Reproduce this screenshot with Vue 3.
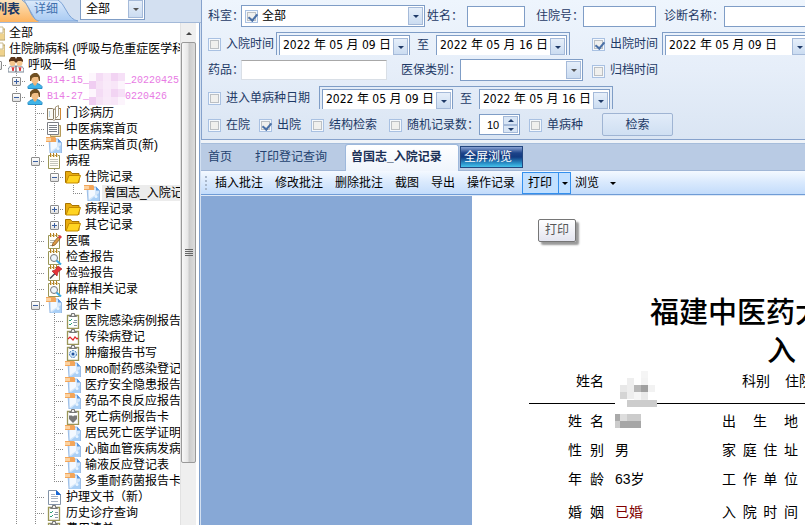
<script setup>
import { ref } from 'vue'

const pad = '<path d="M2.500 2.500h11v13h-11z" fill="#fffef6" stroke="#9a9658"/><path d="M4.500 0v4M7.500 0v4M10.500 0v4" stroke="#b9811f"/><path d="M5.500 1v3M8.500 1v3M11.500 1v3" stroke="#e8d9b0"/>'
const clip = '<path d="M2.500 2.500h11v13h-11z" fill="#fdfefe" stroke="#9a9658" stroke-width="1.300"/><path d="M4.500 3.500v-1h2v-2h3v2h2v1z" fill="#eee" stroke="#777"/>'

const art = {
  box: '<path d="M1 3h5l1 1h9v11H1z" fill="#f3e3b8" stroke="#b79a55"/><path d="M8 2h6v6H8z" fill="#fff" stroke="#c9b98c"/><path d="M3 9h12v5H3z" fill="#efd28c"/>',
  group: '<path d="M0 15q0-6 4-6h8q4 0 4 6z" fill="#fafcfd" stroke="#7f8b99"/><circle cx="4.500" cy="6" r="3" fill="#f5c68d"/><circle cx="11.500" cy="6" r="3" fill="#f5c68d"/><path d="M1 5V3l2-3h4l1 2 1-2h4l2 3v2l-2-1h-3l-2 2-2-2H3z" fill="#5b3418"/><path d="M4 10l1 4 1-4M11 10l1 4 1-4" stroke="#d22" fill="none"/><path d="M8 9v6" stroke="#445"/>',
  person: '<path d="M1 15.500v-2l2-2 3-1h4l3 1 2 2v2z" fill="#3fb4e8" stroke="#2a90c8"/><path d="M6 9h4v2l-2 2-2-2z" fill="#e8ae74"/><ellipse cx="8" cy="6" rx="4" ry="4.500" fill="#f2bf86"/><path d="M3 8V3l2-2 2-1h3l2 2 1 2v4h-1L11 4H7L5 5 4 8z" fill="#705023"/>',
  book: '<path d="M1.500 3.500l5 0 1.500 1 1.500-1h5v11H9l-1 1-1-1H1.500z" fill="#fbfaf4" stroke="#8a7a62"/><path d="M7.500 4v10" stroke="#8a7a62"/><path d="M9.500 2l3-1.500v10l-3 3z" fill="#fff" stroke="#a89a7e"/><path d="M14.500 3v11" stroke="#d08a35"/><path d="M3.500 6v6" stroke="#b8cfdc"/>',
  pages: '<path d="M4.500 4.500h10v11h-10z" fill="#efe0b8" stroke="#b59a58"/><path d="M1.500 1.500h11v12h-11z" fill="#fff" stroke="#7c7f84"/><path d="M3 4.500h8M3 6.500h8M3 8.500h8M3 10.500h8" stroke="#7a7f86"/>',
  docnew: '<path d="M3 2h9l3.500 3.500V16H4z" fill="#d3e6fa" stroke="#86aee0" stroke-width=".8"/><path d="M5 5h6v5l-6 4z" fill="#f4f9ff"/><path d="M12 1.500l3.500 4H12z" fill="#5b97de"/><path d="M5 16l10-8v8z" fill="#a9cff6"/><circle cx="12" cy="11.500" r="1.500" fill="#e8f4ff"/><path d="M0 0h9l1 1v4H0z" fill="#f3a65a"/><path d="M0 1h5v3H0z" fill="#fcd2a0"/>',
  notepad: pad + '<path d="M4 6.500h8M4 8.500h8M4 10.500h8M4 12.500h8" stroke="#c3c5bc"/>',
  pencil: pad + '<path d="M4 7.500h5M4 9.500h3M4 12.500h4" stroke="#b4b8b0"/><path d="M6 13l1-3 5-6 2 2-5 6z" fill="#d99a45" stroke="#7c4a1c" stroke-width=".7"/><path d="M12 4l2-2 2 2-2 2z" fill="#e0343c"/>',
  search: pad + '<circle cx="8" cy="9" r="3.500" fill="#eef6fb" stroke="#777"/><path d="M10.500 11.500l4.500 4" stroke="#36a9e6" stroke-width="2"/>',
  pin: pad + '<path d="M4 13.500l5-5" stroke="#445" stroke-width="1.500"/><path d="M6 6l3-1 3-4 4 3-4 3-1 4z" fill="#e63338" stroke="#a31519" stroke-width=".6"/>',
  folder: '<path d="M.5 13.500v-11h5l1.500 2h7v9z" fill="#e8ac10" stroke="#a87400"/><path d="M1 14l3-7.500h11.500l-2.500 7.500z" fill="#ffd422" stroke="#c58b00"/>',
  check: clip + '<path d="M4 7l1 1 2-2M4 11l1 1 2-2" fill="none" stroke="#2aa07a"/><path d="M9 7.500h3M8 9.500h4M9 12.500h3" stroke="#8899a8"/>',
  line: clip + '<path d="M3 10l2-2 3 3 2-3 2 2 1-1" fill="none" stroke="#e0262c" stroke-width="1.200"/>',
  dot: clip + '<circle cx="8" cy="9" r="3.500" fill="#d4e8fa" stroke="#3c78b8" stroke-dasharray="2 1"/><circle cx="8" cy="9" r="1.500" fill="#1e4f9a"/>',
  heart: clip + '<path d="M8 14L4 10V6.500h3l1 1 1-1h3V10z" fill="#777"/>',
  sheet: '<path d="M2.500 1.500h8l4 4v10h-12z" fill="#fff" stroke="#8494a8"/><path d="M10 1l5 5h-5z" fill="#1767d8"/><path d="M5 5.500h4M5 7.500h7M5 9.500h7M5 12.500h7" stroke="#a7b2c2"/>',
}

/* guides: v line, t branch, l last branch, + / - toggles, p toggle on last branch, . blank */
const rows = [
  { g: '', i: 'box', t: '全部' },
  { g: '', i: 'box', t: '住院肺病科 (呼吸与危重症医学科' },
  { g: '-', i: 'group', t: '呼吸一组' },
  { g: '.+', i: 'person', a: 'B14-15_', b: '_20220425' },
  { g: '.-', i: 'person', a: 'B14-27_', b: '0220426' },
  { g: '.vt', i: 'book', t: '门诊病历' },
  { g: '.vt', i: 'pages', t: '中医病案首页' },
  { g: '.vt', i: 'docnew', t: '中医病案首页(新)' },
  { g: '.v-', i: 'notepad', t: '病程' },
  { g: '.vv-', i: 'folder', t: '住院记录' },
  { g: '.vvvl', i: 'docnew', t: '曾国志_入院记', on: true },
  { g: '.vv+', i: 'folder', t: '病程记录' },
  { g: '.vvp', i: 'folder', t: '其它记录' },
  { g: '.vt', i: 'pencil', t: '医嘱' },
  { g: '.vt', i: 'search', t: '检查报告' },
  { g: '.vt', i: 'pin', t: '检验报告' },
  { g: '.vt', i: 'search', t: '麻醉相关记录' },
  { g: '.v-', i: 'docnew', t: '报告卡' },
  { g: '.vvt', i: 'check', t: '医院感染病例报告' },
  { g: '.vvt', i: 'line', t: '传染病登记' },
  { g: '.vvt', i: 'dot', t: '肿瘤报告书写' },
  { g: '.vvt', i: 'docnew', m: 'MDRO', t: '耐药感染登记' },
  { g: '.vvt', i: 'docnew', t: '医疗安全隐患报告' },
  { g: '.vvt', i: 'docnew', t: '药品不良反应报告' },
  { g: '.vvt', i: 'heart', t: '死亡病例报告卡' },
  { g: '.vvt', i: 'docnew', t: '居民死亡医学证明' },
  { g: '.vvt', i: 'docnew', t: '心脑血管疾病发病' },
  { g: '.vvt', i: 'docnew', t: '输液反应登记表' },
  { g: '.vvl', i: 'docnew', t: '多重耐药菌报告卡' },
  { g: '.vt', i: 'sheet', t: '护理文书（新）' },
  { g: '.vt', i: 'check', t: '历史诊疗查询' },
  { g: '.vt', i: 'check', t: '费用清单' },
]

const kind = { v: 'v', t: 'v h', l: 'half h', '+': 'v h', '-': 'v h', p: 'half h', '.': '' }
const tools = ['插入批注', '修改批注', '删除批注', '截图', '导出', '操作记录']
const from = ref('2022 年 05 月 09 日')
const to = ref('2022 年 05 月 16 日')

const tiles = ['#fff', '#fff', '#fff', '#f5f5f5', '#fff', '#fff', '#eee', '#fff', '#f3f3f3', '#fff', '#e8e8e8', '#eee', '#b8b8b8', '#a0a0a0', '#f2f2f2', '#d5d5d5', '#eee', '#f6f6f6', '#e9e9e9', '#fff', '#fff', '#fff', '#f6f6f6', '#ebebeb', '#fff']
const pinks = ['#fdf6fd', '#f4dcf5', '#f9e8f9', '#f2d4f3', '#f6e0f7', '#f0cdf2', '#f6e2f6', '#f9eaf9', '#f8e6f8', '#fcf4fc']

const record = [
  ['姓 名', '', '出 生 地'],
  ['性 别', '男', '家 庭 住 址'],
  ['年 龄', '63岁', '工 作 单 位'],
  ['婚 姻', '已婚', '入 院 时 间'],
]
</script>

<template>
  <div class="app">
    <aside class="side">
      <div class="side-top">
        <svg class="side-shape" width="80" height="22" viewBox="0 0 80 22" aria-hidden="true">
          <defs>
            <linearGradient id="org" x1="0" y1="0" x2="0" y2="1"><stop offset="0" stop-color="#fbe3bd" /><stop offset="1" stop-color="#fdb460" /></linearGradient>
            <linearGradient id="blu" x1="0" y1="0" x2="0" y2="1"><stop offset="0" stop-color="#dceafb" /><stop offset="1" stop-color="#a9cbf3" /></linearGradient>
          </defs>
          <path d="M24 0H58Q62 2 66 10Q71 20 78 21H36z" fill="url(#blu)" stroke="#7da3d6" />
          <path d="M0 0H22Q26 2 29 9Q33 20 39 22H0z" fill="url(#org)" />
          <path d="M22 0Q26 2 29 9Q33 20 39 21" fill="none" stroke="#8aa3c4" />
        </svg>
        <button class="side-tab on">列表</button>
        <button class="side-tab">详细</button>
        <div class="combo scope">
          <select aria-label="范围"><option>全部</option></select>
          <span class="drop gray"></span>
        </div>
      </div>
      <div class="tree-wrap">
        <div class="tree" role="tree">
          <div v-for="(r, k) in rows" :key="k" class="row" role="treeitem">
            <span v-for="(c, n) in r.g" :key="n" class="cell" :class="kind[c]">
              <i v-if="'+-p'.includes(c)" class="toggle" :class="{ plus: c !== '-' }"></i>
            </span>
            <svg class="ico" width="16" height="16" viewBox="0 0 16 16" fill="none" v-html="art[r.i]"></svg>
            <span v-if="r.a" class="txt patient">{{ r.a }}<span class="veil"><i v-for="(p, n) in pinks" :key="n" :style="{ background: p }"></i></span>{{ r.b }}</span>
            <span v-else class="txt" :class="{ on: r.on }"><span v-if="r.m" class="mono">{{ r.m }}</span>{{ r.t }}</span>
          </div>
        </div>
        <div class="scroll">
          <button class="up" aria-label="向上"></button>
          <div class="thumb"><i></i><i></i><i></i><i></i></div>
        </div>
      </div>
    </aside>

    <main class="main">
      <form class="filters" @submit.prevent>
        <div class="line l1">
          <label for="dept">科室：</label>
          <div class="combo dept">
            <input type="checkbox" checked aria-label="全部科室">
            <select id="dept"><option>全部</option></select>
            <span class="drop"></span>
          </div>
          <label for="name">姓名：</label>
          <input id="name" class="box w58">
          <label for="no">住院号：</label>
          <input id="no" class="box w73">
          <label for="diag">诊断名称：</label>
          <input id="diag" class="box open-end">
        </div>
        <div class="line l2">
          <input id="in" type="checkbox"><label for="in">入院时间</label>
          <div class="range">
            <div class="date"><input v-model="from" aria-label="入院开始"><span class="drop"></span></div>
            <span>至</span>
            <div class="date"><input v-model="to" aria-label="入院结束"><span class="drop"></span></div>
          </div>
          <input id="out" type="checkbox" checked><label for="out">出院时间</label>
          <div class="range open">
            <div class="date"><input v-model="from" aria-label="出院开始"><span class="drop"></span></div>
          </div>
        </div>
        <div class="line l3">
          <label for="drug">药品：</label>
          <input id="drug" class="sunk">
          <label for="ins">医保类别：</label>
          <div class="combo ins"><select id="ins"><option></option></select><span class="drop gray"></span></div>
          <input id="arch" type="checkbox"><label for="arch">归档时间</label>
        </div>
        <div class="line l4">
          <input id="single" type="checkbox"><label for="single">进入单病种日期</label>
          <div class="range">
            <div class="date"><input v-model="from" aria-label="开始"><span class="drop"></span></div>
            <span>至</span>
            <div class="date"><input v-model="to" aria-label="结束"><span class="drop"></span></div>
          </div>
        </div>
        <div class="line l5">
          <input id="c1" type="checkbox"><label for="c1">在院</label>
          <input id="c2" type="checkbox" checked><label for="c2">出院</label>
          <input id="c3" type="checkbox"><label for="c3">结构检索</label>
          <input id="c4" type="checkbox"><label for="c4">随机记录数：</label>
          <div class="spin"><input value="10" aria-label="随机记录数"><span class="steps"><button type="button" aria-label="增加"></button><button type="button" aria-label="减少"></button></span></div>
          <input id="c5" type="checkbox"><label for="c5">单病种</label>
          <button class="go">检索</button>
        </div>
      </form>

      <nav class="tabs">
        <button class="tab home">首页</button>
        <button class="tab log">打印登记查询</button>
        <button class="tab on">曾国志_入院记录</button>
        <button class="full">全屏浏览</button>
      </nav>

      <div class="tools">
        <span class="grip"><i></i><i></i><i></i><i></i></span>
        <button v-for="t in tools" :key="t">{{ t }}</button>
        <div class="print">
          <button>打印</button><button class="more" aria-label="打印选项"></button>
        </div>
        <button class="view">浏览</button>
      </div>

      <section class="desk">
        <article class="paper">
          <div class="tip" role="tooltip">打印</div>
          <div class="head">
            <h1>福建中医药大</h1>
            <h2>入</h2>
          </div>
          <div class="who">
            <span>姓名</span>
            <span class="mosaic"><i v-for="(c, n) in tiles" :key="n" :style="{ background: c }"></i></span>
            <span>科别</span>
            <span>住院</span>
          </div>
          <div class="rule"><i class="left"></i><i class="bar"></i><i class="right"></i></div>
          <dl v-for="(r, n) in record" :key="n" class="rec">
            <dt>{{ r[0] }}</dt>
            <dd v-if="r[1]" :class="{ red: n === 3 }">{{ r[1] }}</dd>
            <dd v-else><span class="blot"><i></i><i></i><i></i><i></i><i></i><i></i></span></dd>
            <dt>{{ r[2] }}</dt>
          </dl>
        </article>
      </section>
    </main>
  </div>
</template>

<style>
body { margin: 0; overflow: hidden; }
</style>

<style scoped>
* { box-sizing: border-box; }
.app { display: flex; height: 100vh; overflow: hidden; background: #dfe9f6; font: 12px/16px "Liberation Sans", "Noto Sans CJK SC", sans-serif; color: #000; }
button, input, select { font: inherit; color: inherit; margin: 0; padding: 0; border: 0; background: none; border-radius: 0; outline: 0; min-width: 0; }
button { white-space: nowrap; }

/* sidebar */
.side { flex: none; width: 201px; display: flex; flex-direction: column; background: #d3e0f1; }
.side-top { position: relative; display: flex; align-items: flex-start; height: 23px; flex: none; border-bottom: 1px solid #a3b9d8; }
.side-shape { position: absolute; left: 0; top: 0; }
.side-tab { position: relative; width: 46px; height: 17px; margin-left: 14px; color: #3f6fae; text-align: left; }
.side-tab.on { width: 26px; margin-left: -6px; font-size: 13px; font-weight: bold; color: #1d3a66; }
.combo { display: flex; align-items: stretch; background: #fff; border: 1px solid #7f9dc6; height: 22px; padding: 1px; }
.combo select { appearance: none; flex: 1; color: #000; padding-left: 4px; }
.combo input { align-self: center; margin-left: 2px; }
.scope { width: 65px; height: 20px; border-top: 0; padding-top: 0; }
.drop { position: relative; flex: none; width: 15px; border: 1px solid #a5bad9; background: linear-gradient(#e6effa, #cbdcf1); }
.drop::after, .more::after, .view::after, .up::after, .steps button::after { content: ""; position: absolute; left: 50%; top: 50%; margin: -1px 0 0 -3px; border: 3px solid transparent; border-top-color: #1f3a68; border-bottom: 0; }
.drop.gray::after { border-top-color: #555; }

.tree-wrap { flex: 1; min-height: 0; display: flex; background: #fff; border-right: 1px solid #7f9ec9; margin-right: 1px; padding-right: 3px; }
.tree { flex: 1; min-width: 0; overflow: hidden; padding-top: 2px; }
.row { display: flex; align-items: center; height: 16px; margin-left: -12px; white-space: nowrap; }
.cell { position: relative; flex: none; width: 19px; height: 16px; display: flex; align-items: center; justify-content: center; background-repeat: no-repeat; }
.v { background-image: repeating-linear-gradient(#888 0 1px, transparent 1px 2px); background-size: 1px 100%; background-position: 9px 0; }
.half { background-image: repeating-linear-gradient(#888 0 1px, transparent 1px 2px); background-size: 1px 8px; background-position: 9px 0; }
.h::before { content: ""; position: absolute; left: 9px; right: 0; top: 8px; height: 1px; background: repeating-linear-gradient(90deg, #888 0 1px, transparent 1px 2px); }
.toggle { position: relative; width: 9px; height: 9px; border: 1px solid #8c8c8c; border-radius: 1px; background: linear-gradient(#3a5fa0, #3a5fa0) center / 5px 1px no-repeat, linear-gradient(#fff, #e0e0e0); }
.toggle.plus { background: linear-gradient(#3a5fa0, #3a5fa0) center / 5px 1px no-repeat, linear-gradient(#3a5fa0, #3a5fa0) center / 1px 5px no-repeat, linear-gradient(#fff, #e0e0e0); }
.ico { flex: none; margin: 0 2px 0 1px; }
.txt { padding-left: 2px; height: 16px; }
.txt.on { background: #ececec; }
.mono, .patient { font-family: "Liberation Mono", monospace; font-size: 10px; }
.patient { display: flex; align-items: center; color: #e87be4; }
.veil { display: grid; grid-template-columns: repeat(5, 1fr); width: 36px; height: 16px; }
.scroll { flex: none; width: 16px; background: #efefef; border-left: 1px solid #e2e2e2; display: flex; flex-direction: column; }
.up { position: relative; height: 19px; flex: none; }
.up::after { border-top: 0; border-bottom: 3px solid #444; }
.thumb { height: 421px; border: 1px solid #999; border-radius: 2px; background: linear-gradient(90deg, #f8f8f8, #e6e6e6 45%, #cbcbcb 55%, #dcdcdc); display: flex; flex-direction: column; align-items: center; justify-content: center; gap: 1px; }
.thumb i { width: 8px; height: 1px; background: #666; }

/* filters */
.main { flex: 1; min-width: 0; display: flex; flex-direction: column; }
.filters { flex: none; display: flex; flex-direction: column; gap: 5px; padding: 5px 0 4px 6px; border-left: 1px solid #86a2cc; border-bottom: 1px solid #86a2cc; background: linear-gradient(#eef5fd, #e6eef9 50%, #dae5f3); color: #1e3a66; overflow: hidden; }
.line { display: grid; align-items: center; height: 22px; white-space: nowrap; }
.line > label { height: 16px; }
.l1 { grid-template-columns: 33px 186px 40px 69px 47px 81px 60px 1fr; }
.l2 { grid-template-columns: 18px 50px 316px 18px 52px 1fr; }
.l3 { grid-template-columns: 33px 160px 59px 132px 18px 1fr; }
.l4 { grid-template-columns: 18px 93px 1fr; }
.l5 { grid-template-columns: 18px 33px 18px 34px 18px 60px 18px 72px 50px 18px 55px 1fr; }
input[type="checkbox"] { appearance: none; position: relative; width: 13px; height: 13px; border: 1px solid #a9c1e2; background: #f0f0ee; box-shadow: inset 0 0 0 1px #f4f8fd, inset 0 0 0 2px #bcc0c4; }
.line > input[type="checkbox"] { margin-top: 2px; }
input[type="checkbox"]:checked::after { content: ""; position: absolute; left: 4px; top: 1px; width: 4px; height: 7px; border: solid #4a70a6; border-width: 0 2px 2px 0; transform: rotate(40deg); }
.box { height: 21px; border: 1px solid #7f9dc6; background: #fff; width: 100%; }
.open-end { border-right: 0; }
.w58 { width: 58px; }
.w73 { width: 73px; }
.dept { width: 184px; }
.ins { width: 123px; }
.sunk { width: 146px; height: 20px; background: #fff; border: 1px solid #d9dfe6; border-top-color: #a8a8a8; }
.range { display: flex; align-items: center; width: 294px; height: 23px; padding: 2px 2px 0; border: 1px solid #7f9dc6; border-bottom: 0; }
.range.open { width: 100%; border-right: 0; padding-right: 0; }
.range > span { flex: 1; text-align: center; }
.date { display: flex; align-items: flex-end; width: 131px; height: 20px; background: #fff; border: 1px solid #7f9dc6; border-bottom: 0; padding-right: 1px; }
.date input { flex: 1; height: 20px; color: #000; padding: 0 0 4px 3px; font-family: "DejaVu Sans Condensed", "Liberation Sans", "Noto Sans CJK SC", sans-serif; }
.date .drop { height: 17px; }
.open .date { width: 144px; }
.spin { display: flex; width: 41px; height: 21px; background: #fff; border: 1px solid #7f9dc6; padding: 1px; }
.spin input { flex: 1; color: #000; padding-left: 6px; font-size: 11px; }
.steps { display: flex; flex-direction: column; width: 15px; }
.steps button { position: relative; flex: 1; border: 1px solid #a5bad9; background: #d8e5f5; }
.steps button:first-child::after { border-top: 0; border-bottom: 3px solid #1f3a68; }
.go { width: 71px; height: 23px; border: 1px solid #9fb4d3; border-radius: 2px; background: linear-gradient(#e2ecf9, #cfdff2); }

/* tabs */
.tabs { flex: none; display: flex; height: 28px; margin-top: 3px; border-top: 1px solid #a6bddb; border-bottom: 1px solid #a0b6d6; background: #b9cbe4; color: #24426f; box-shadow: 0 -3px 0 #eff3f8; }
.tab { text-align: left; height: 26px; }
.home { width: 54px; padding-left: 7px; }
.log { width: 90px; }
.tab.on { width: 114px; height: 28px; padding: 0 0 4px 5px; font-weight: bold; color: #1c3157; background: linear-gradient(#fff, #eef4fc); border: 1px solid #9db8dc; border-bottom: 0; border-radius: 3px 3px 0 0; }
.full { margin: 2px 0 0 1px; width: 63px; height: 22px; padding-left: 3px; text-align: left; color: #fff; border: 1px solid #24477f; background: linear-gradient(#8aa3d4, #1d4389 30%, #123a80 50%, #2d9ad0 85%, #48c3ea); }

.tools { flex: none; display: flex; align-items: center; gap: 12px; height: 24px; padding-left: 4px; background: linear-gradient(#f4f9ff, #d9e9fd 50%, #c3dcfb); border-bottom: 1px solid #6f9cd6; }
.grip { display: flex; flex-direction: column; gap: 2px; width: 2px; margin-right: -4px; }
.grip i { width: 2px; height: 2px; background: #a9b8cc; }
.tools > button { height: 20px; }
.print { display: flex; height: 22px; margin: 0 -8px 0 -5px; border: 1px solid #3390ee; background: #c2e0ff; }
.print button { width: 35px; padding-right: 1px; }
.print .more { position: relative; width: 12px; border-left: 1px solid #3390ee; padding: 0; }
.more::after, .view::after { border-top-color: #000; }
.view { position: relative; width: 40px; text-align: left; }
.view::after { left: 38px; }

/* document */
.desk { flex: 1; min-height: 0; display: flex; margin-top: 1px; background: #87a8d6; padding-left: 271px; }
.paper { position: relative; flex: 1; min-width: 0; overflow: hidden; background: #fff; padding: 95px 0 0 57px; font-size: 14px; line-height: 20px; white-space: nowrap; }
.tip { position: absolute; left: 66px; top: 23px; width: 38px; height: 23px; border: 1px solid #767676; border-radius: 2px; background: linear-gradient(#fff, #e4e5f0); box-shadow: 3px 3px 2px #999; color: #575757; text-align: center; font-size: 12px; line-height: 20px; }
h1, h2 { margin: 0; font-weight: 500; font-family: "Noto Sans CJK SC", sans-serif; }
.head { padding-left: 121px; }
h1 { font-size: 29px; line-height: 38px; }
h2 { font-size: 29px; line-height: 38px; padding-left: 117px; }
.who { display: grid; grid-template-columns: 44px 122px 43px 1fr; padding-left: 47px; height: 33px; align-items: start; padding-top: 4px; }
.mosaic { display: grid; grid-template-columns: repeat(5, 7px); grid-auto-rows: 7px; align-self: end; }
.rule { display: flex; align-items: center; height: 7px; }
.rule .left { width: 86px; height: 1px; background: #000; margin-right: 12px; }
.rule .bar { width: 30px; height: 7px; background: #ccc; }
.rule .right { flex: 1; height: 1px; background: #000; }
.rec { display: grid; grid-template-columns: 36px 96px 76px; column-gap: 11px; margin: 0 0 9px; padding-left: 39px; }
.rec:nth-of-type(1) { margin-top: 4px; }
.rec:nth-of-type(3) { margin-bottom: 13px; }
.rec dt { text-align-last: justify; }
.rec dd { margin: 0; }
.red { color: #800000; }
.blot { display: grid; grid-template-columns: 5px 7px 14px; grid-auto-rows: 7px; padding-top: 3px; }
.blot i { background: #ccc; }
.blot i:nth-child(1) { background: #aaa; }
.blot i:nth-child(2) { background: #ddd; }
.blot i:nth-child(n + 5) { background: #a6a6a6; }
</style>
